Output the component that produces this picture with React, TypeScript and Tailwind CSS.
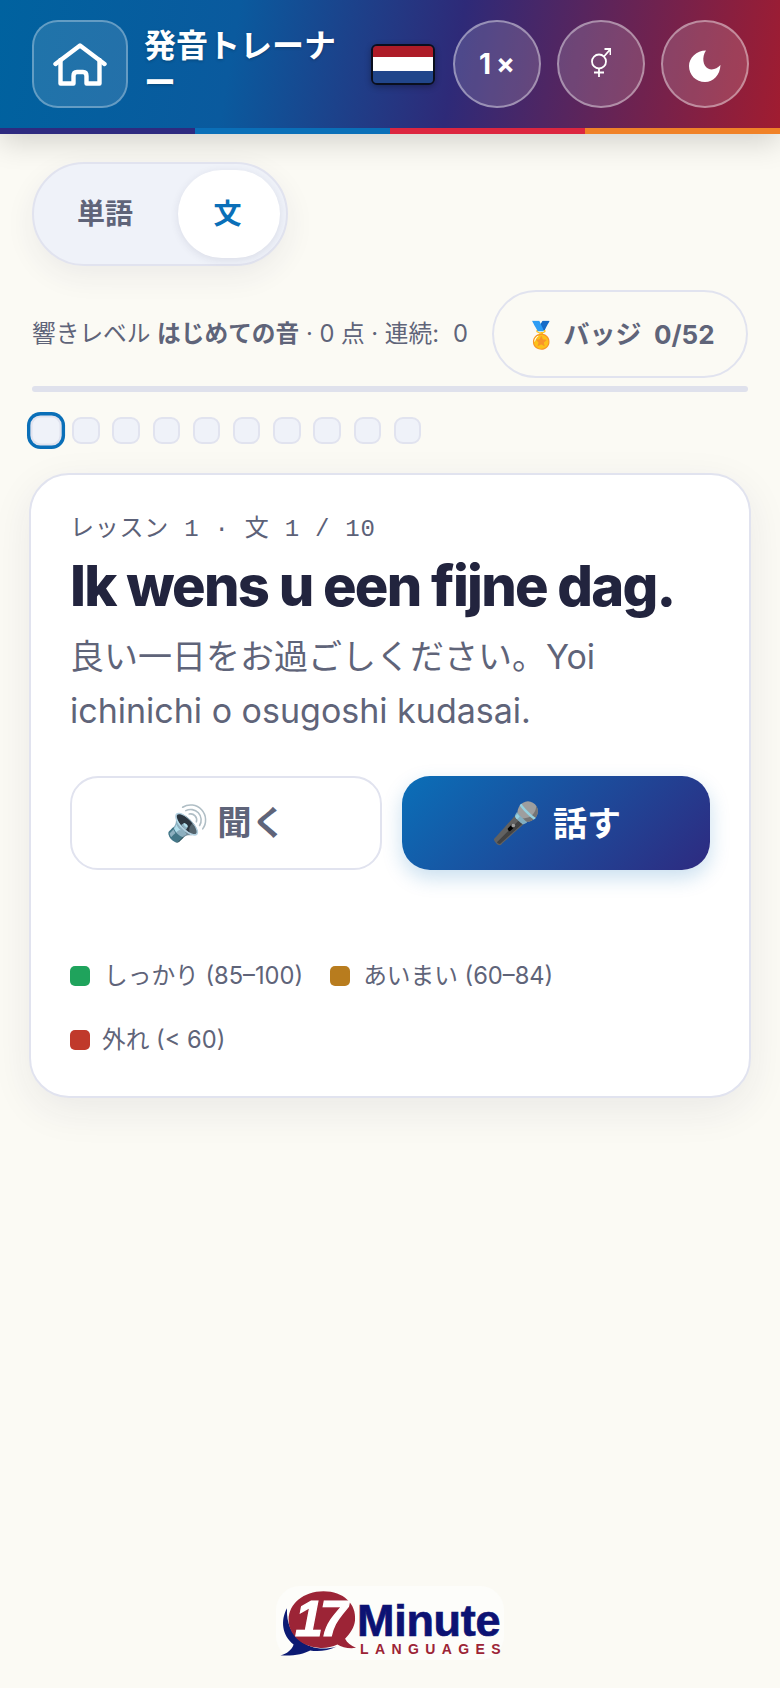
const jp = '"Inter","Noto Sans CJK JP",sans-serif';
const arial = '"Liberation Sans",sans-serif';

function Home() {
  return (
    <svg width="54" height="43" viewBox="0 0 54 43" fill="none" stroke="white" strokeWidth="4.4" strokeLinejoin="round" strokeLinecap="round">
      <path d="M2.5 21 L27 2.5 L51.5 21" />
      <path d="M7.5 17 V40.5 H20.5 V33 Q20.5 29 24 29 H30 Q33.5 29 33.5 33 V40.5 H46.5 V17" />
    </svg>
  );
}

function Logo() {
  return (
    <div className="relative w-[228px] h-[74px] bg-[#fdfdfa] rounded-[24px]">
      <svg className="absolute left-[1px] top-[1px]" width="83" height="72" viewBox="50 50 250 215">
        <path d="M80 113 C60 150 65 195 100 222 C95 238 80 250 60 255 C100 258 130 250 150 240 C175 245 205 240 230 228 C190 240 150 235 120 210 C95 190 78 160 80 113 Z" fill="#0c1a73" />
        <path d="M190 62 C250 62 290 100 285 150 C283 170 270 190 255 205 C262 218 272 226 288 232 C268 236 245 230 232 222 C215 230 195 234 175 232 C120 228 85 190 85 148 C85 100 130 62 190 62 Z" fill="#9c2436" />
      </svg>
      <span className="absolute left-[19px] top-[0px] text-[50px] leading-[66px] font-bold italic text-white tracking-[-3px]" style={{ fontFamily: arial, WebkitTextStroke: '1.2px white' }}>17</span>
      <span className="absolute left-[81px] top-[14px] text-[45px] leading-[42px] font-bold text-[#0c1273] tracking-[-0.3px]" style={{ fontFamily: arial, WebkitTextStroke: '0.7px #0c1273' }}>Minute</span>
      <span className="absolute left-[84px] top-[56px] text-[14px] leading-[14px] font-bold text-[#9c2436] tracking-[6.4px] whitespace-nowrap" style={{ fontFamily: arial }}>LANGUAGES</span>
    </div>
  );
}

export default function App() {
  const dots = [0, 1, 2, 3, 4, 5, 6, 7, 8];
  return (
    <div className="min-h-[1688px] bg-[#fbfaf4] flex flex-col text-[#5c6178]" style={{ fontFamily: jp }}>
      <header className="h-[134px] flex flex-col bg-[linear-gradient(100deg,#00629f_0%,#0a5a9e_30%,#2e2a78_58%,#a11c30_100%)] shadow-[0_8px_28px_rgba(0,0,0,0.16)]">
        <div className="h-[128px] flex items-center pl-[32px] pr-[31px]">
          <div className="w-[96px] h-[88px] shrink-0 rounded-[26px] border-2 border-white/30 bg-white/12 flex items-center justify-center">
            <Home />
          </div>
          <div className="w-[195px] ml-[16px] text-[32px] leading-[37px] font-bold text-white break-all [text-shadow:0_1px_3px_rgba(0,0,0,0.25)]">発音トレーナー</div>
          <div className="w-[64px] h-[41px] ml-[32px] shrink-0 rounded-[6px] border-2 border-[#0a0f1e] overflow-hidden flex flex-col shadow-[0_2px_6px_rgba(0,0,0,0.3)]">
            <div className="h-[11px] bg-[#ae1c28]" />
            <div className="flex-1 bg-white" />
            <div className="h-[12px] bg-[#21468b]" />
          </div>
          <div className="ml-[18px] flex gap-[16px]">
            <div className="w-[88px] h-[88px] rounded-full border-2 border-white/40 bg-white/15 flex items-center justify-center text-white text-[28px] font-bold" style={{ fontFamily: 'Inter,sans-serif' }}>1<span className="ml-[5px]">×</span></div>
            <div className="w-[88px] h-[88px] rounded-full border-2 border-white/40 bg-white/15 flex items-center justify-center pb-[4px]">
              <svg width="20" height="29" viewBox="0 0 20 29" fill="none" stroke="white" strokeWidth="1.8">
                <circle cx="8" cy="13.5" r="7" />
                <path d="M8 20.5 V29 M3 24.5 H13 M13 8.5 L19.5 1 M13.5 1 H19.5 V7" />
              </svg>
            </div>
            <div className="w-[88px] h-[88px] rounded-full border-2 border-white/40 bg-white/15 flex items-center justify-center pt-[3px]">
              <svg width="32" height="32" viewBox="0 0 32 32" fill="white">
                <path d="M17 0.5 C7.5 0.5 0 8 0 16 C0 25 7 32 16 32 C24.5 32 31 25 31.5 15 C28 19 23 20.5 19 18.5 C14 16 12.5 7 17 0.5 Z" />
              </svg>
            </div>
          </div>
        </div>
        <div className="h-[6px] grid grid-cols-4">
          <div className="bg-[#2e2a80]" />
          <div className="bg-[#0a6fb8]" />
          <div className="bg-[#dc2640]" />
          <div className="bg-[#f08228]" />
        </div>
      </header>

      <main className="flex flex-col px-[32px] pt-[28px]">
        <div className="w-[256px] h-[104px] rounded-full bg-[#eff2f9] border-2 border-[#e1e3ef] flex items-center pl-[4px] shadow-[0_10px_30px_rgba(40,40,80,0.07)]">
          <div className="w-[134px] text-center text-[28px] font-bold text-[#5f6479]">単語</div>
          <div className="w-[102px] h-[88px] ml-[6px] pr-[3px] rounded-full bg-white flex items-center justify-center text-[28px] font-bold text-[#0a6fb8] shadow-[0_2px_8px_rgba(40,40,80,0.1)]">文</div>
        </div>

        <div className="flex items-center justify-between mt-[24px]">
          <div className="text-[23.7px] whitespace-nowrap text-[#5f6479]">響きレベル <b className="font-bold">はじめての音</b> · 0 点 · 連続:<span className="ml-[14px]">0</span></div>
          <div className="w-[256px] h-[88px] shrink-0 rounded-full border-2 border-[#e1e3ef] flex items-center justify-center text-[26px] font-bold text-[#5f6479]">🏅 バッジ&nbsp;&nbsp;0/52</div>
        </div>

        <div className="h-[6px] mt-[8px] rounded-full bg-[#dfe1ec]" />

        <div className="flex items-center gap-[12.7px] mt-[24px] h-[28px] mb-[29px]">
          <div className="w-[27.5px] h-[27px] rounded-[9px] bg-[#eff2f9] border-2 border-[#e1e3ef] ring-[3px] ring-[#0a6fb8] scale-[1.12]" />
          {dots.map((d) => (
            <div key={d} className="w-[27.5px] h-[27px] rounded-[9px] bg-[#eff2f9] border-2 border-[#e1e3ef]" />
          ))}
        </div>

        <div className="-mx-[3px] h-[625px] rounded-[40px] bg-white border-2 border-[#e1e3ef] shadow-[0_12px_40px_rgba(40,40,80,0.08)] px-[39px] pt-[41px] flex flex-col">
          <div className="text-[24px] leading-[28px] text-[#5c6178] tracking-[0.75px]" style={{ fontFamily: '"Liberation Mono","Noto Sans CJK JP",monospace' }}>レッスン 1 · 文 1 / 10</div>
          <h1 className="mt-[7px] text-[56px] leading-[70px] font-extrabold text-[#22243e] tracking-[-1.75px] whitespace-nowrap">Ik wens u een fijne dag.</h1>
          <p className="mt-[9px] text-[34px] leading-[54px] text-[#5f6479]">良い一日をお過ごしください。Yoi ichinichi o osugoshi kudasai.</p>
          <div className="flex gap-[20px] mt-[38px]">
            <div className="flex-1 h-[94px] rounded-[28px] border-2 border-[#e1e3ef] bg-white flex items-center justify-center text-[34.4px] font-bold text-[#5f6479]">🔊 聞く</div>
            <div className="flex-1 h-[94px] rounded-[28px] bg-[linear-gradient(135deg,#0a6fb8,#2e2a80)] flex items-center justify-center text-[34px] font-bold text-white shadow-[0_8px_20px_rgba(10,111,184,0.22)]"><span className="text-[40px] mr-[12px]">🎤</span>話す</div>
          </div>
          <div className="flex flex-wrap gap-x-[27px] gap-y-[22px] mt-[85px] text-[23.7px] leading-[42px] text-[#5f6479]">
            <div className="flex items-center gap-[14px]"><span className="w-[20px] h-[20px] rounded-[5px] bg-[#1fa35c]" />しっかり (85–100)</div>
            <div className="flex items-center gap-[13px]"><span className="w-[20px] h-[20px] rounded-[5px] bg-[#b87c1e]" />あいまい (60–84)</div>
            <div className="flex items-center gap-[12px]"><span className="w-[20px] h-[20px] rounded-[5px] bg-[#c0392b]" />外れ (&lt; 60)</div>
          </div>
        </div>
      </main>

      <footer className="mt-[488px] flex justify-center">
        <Logo />
      </footer>
    </div>
  );
}
